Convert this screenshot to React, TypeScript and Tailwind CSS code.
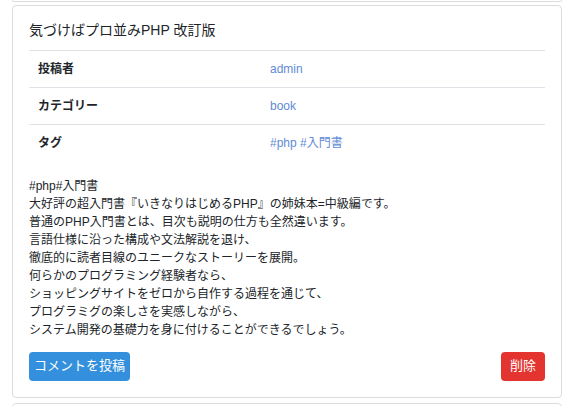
import React from "react";

const font = {
  fontFamily: '"Liberation Sans", "Noto Sans CJK JP", sans-serif',
};

const rows = [
  { label: "投稿者", value: "admin" },
  { label: "カテゴリー", value: "book" },
  { label: "タグ", value: "#php #入門書" },
];

const body = [
  "#php#入門書",
  "大好評の超入門書『いきなりはじめるPHP』の姉妹本=中級編です。",
  "普通のPHP入門書とは、目次も説明の仕方も全然違います。",
  "言語仕様に沿った構成や文法解説を退け、",
  "徹底的に読者目線のユニークなストーリーを展開。",
  "何らかのプログラミング経験者なら、",
  "ショッピングサイトをゼロから自作する過程を通じて、",
  "プログラミグの楽しさを実感しながら、",
  "システム開発の基礎力を身に付けることができるでしょう。",
];

function BookCard() {
  return (
    <div className="mt-[3px] rounded-[4px] border border-[#dcdcdc] bg-white px-4 pt-[16px] pb-[16px]">
      <h2 className="text-[14px] leading-[17px] text-[#212529]">気づけばプロ並みPHP 改訂版</h2>

      <table className="mt-[11px] w-full border-collapse text-[12px]">
        <tbody>
          {rows.map((row) => (
            <tr key={row.label} className="border-t border-[#dee2e6]">
              <th className="w-[232px] h-[37px] px-[9px] text-left font-bold text-[#212529]">
                {row.label}
              </th>
              <td className="h-[37px] px-[9px] text-[#5f8ad6]">{row.value}</td>
            </tr>
          ))}
        </tbody>
      </table>

      <div className="mt-[15px] text-[12px] leading-[18px] text-[#212529]">
        {body.map((line) => (
          <p key={line}>{line}</p>
        ))}
      </div>

      <div className="mt-[13px] flex items-center justify-between">
        <button
          type="button"
          className="h-[29px] w-[101px] rounded-[4px] bg-[#3490dc] text-[13px] text-white"
        >
          コメントを投稿
        </button>
        <button
          type="button"
          className="h-[29px] w-[44px] rounded-[4px] bg-[#e3342f] text-[13px] text-white"
        >
          削除
        </button>
      </div>
    </div>
  );
}

export default function App() {
  return (
    <div className="h-[406px] w-[578px] overflow-hidden bg-white" style={font}>
      <div className="ml-[12px] w-[550px]">
        {/* tail of the card above */}
        <div className="h-[2px] rounded-b-[4px] border border-t-0 border-[#dcdcdc]" />
        <BookCard />
        <div className="mt-[5px] h-[40px] rounded-t-[4px] border border-[#dcdcdc]" />
      </div>
    </div>
  );
}
